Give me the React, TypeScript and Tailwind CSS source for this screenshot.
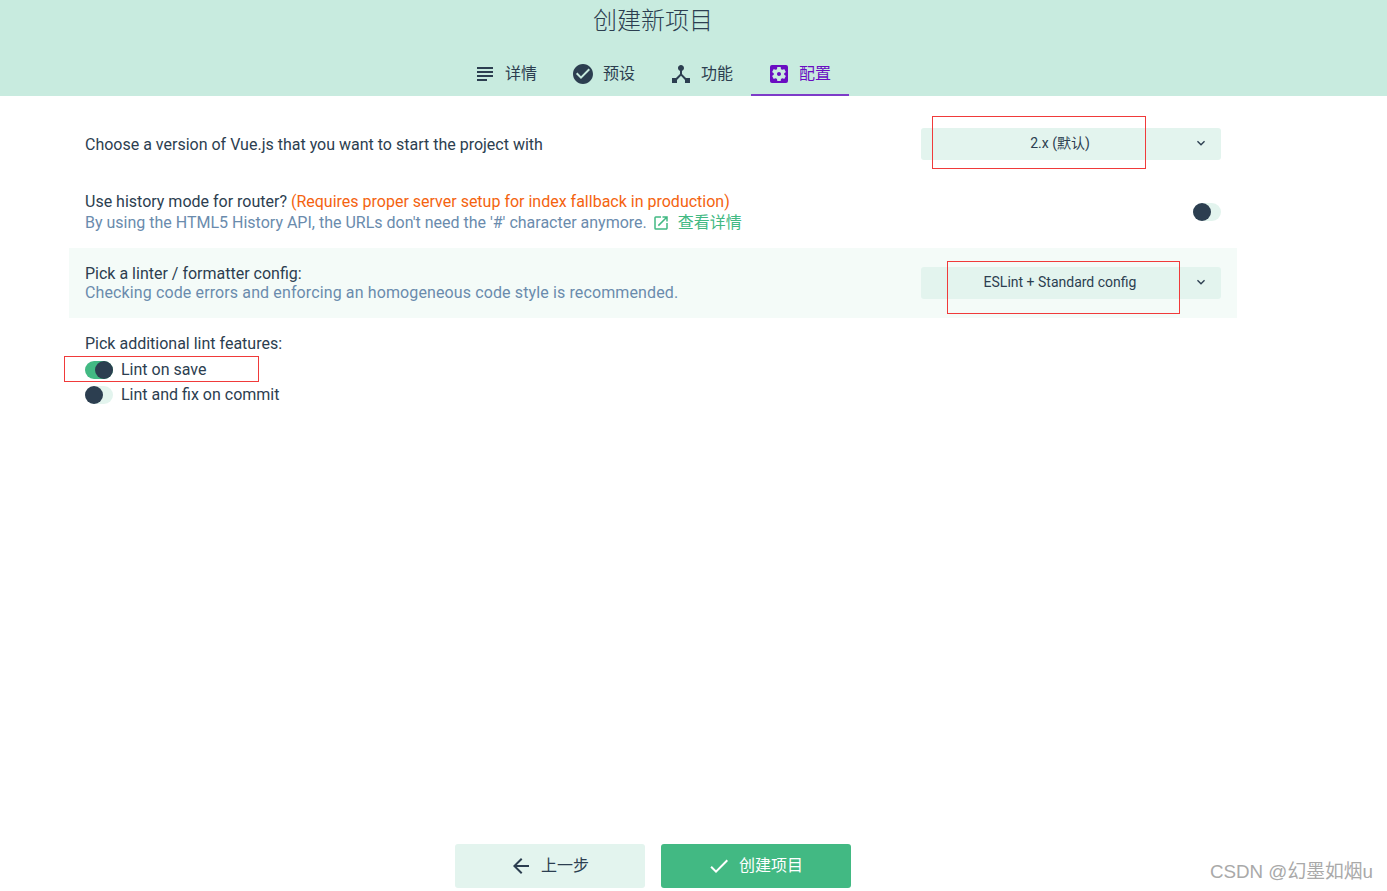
import type { ReactNode } from 'react';
import {
  MdArrowBack,
  MdCheckCircle,
  MdDeviceHub,
  MdDone,
  MdKeyboardArrowDown,
  MdOpenInNew,
  MdSettingsApplications,
  MdSubject,
} from 'react-icons/md';

const fontStack = { fontFamily: 'Roboto, "Noto Sans CJK SC", sans-serif' };

function Tab({ icon, label, active }: { icon: ReactNode; label: string; active?: boolean }) {
  return (
    <div
      className={`flex h-[38px] w-[98px] items-center gap-2 border-b-2 pb-[4px] pl-4 pr-[18px] text-base ${
        active ? 'border-[#7d3cc8] text-[#6a0dc2]' : 'border-transparent text-[#2c3e50]'
      }`}
    >
      {icon}
      <span className="whitespace-nowrap">{label}</span>
    </div>
  );
}

function Select({ value }: { value: string }) {
  return (
    <div className="flex h-8 w-[300px] shrink-0 items-center rounded-[3px] bg-[#e3f4ee] text-sm text-[#2c3e50]">
      <span className="flex-1 pb-[3px] pl-[6px] text-center">{value}</span>
      <MdKeyboardArrowDown className="mr-3 mb-[2px]" size={16} />
    </div>
  );
}

function Toggle({ on }: { on?: boolean }) {
  return (
    <div className={`relative h-[18px] w-7 shrink-0 rounded-full ${on ? 'bg-[#42b983]' : 'bg-[#e3f4ee]'}`}>
      <div className={`absolute top-0 h-[18px] w-[18px] rounded-full bg-[#2c3e50] ${on ? 'right-0' : 'left-0'}`} />
    </div>
  );
}

function RedBox({ className }: { className: string }) {
  return <div className={`pointer-events-none absolute border border-[#f03a3a] ${className}`} />;
}

export default function App() {
  return (
    <div className="relative flex h-[891px] w-full flex-col overflow-hidden bg-white text-base text-[#2c3e50]" style={fontStack}>
      {/* header */}
      <div className="h-24 bg-[#c8ebdf]">
        <div className="flex w-[1306px] flex-col items-center">
          <div className="flex h-[58px] items-start pt-[4px] text-2xl leading-[34px] font-light">创建新项目</div>
          <div className="flex">
            <Tab icon={<MdSubject size={24} />} label="详情" />
            <Tab icon={<MdCheckCircle size={24} />} label="预设" />
            <Tab icon={<MdDeviceHub size={24} />} label="功能" />
            <Tab icon={<MdSettingsApplications size={24} />} label="配置" active />
          </div>
        </div>
      </div>

      {/* prompts */}
      <div className="ml-[69px] flex w-[1168px] flex-col">
        <div className="mt-8 flex h-8 items-center justify-between px-4">
          <span className="pt-[1px]">Choose a version of Vue.js that you want to start the project with</span>
          <Select value="2.x (默认)" />
        </div>

        <div className="mt-[30px] flex h-[44px] items-center justify-between px-4">
          <div className="flex flex-col pt-[2px]">
            <div className="leading-[20px]">
              Use history mode for router? <span className="text-[#f4630f]">(Requires proper server setup for index fallback in production)</span>
            </div>
            <div className="flex items-center leading-[22px] text-[#6a8bad]">
              By using the HTML5 History API, the URLs don't need the '#' character anymore.
              <span className="ml-[5px] flex items-center gap-[8px] text-[#42b983]">
                <MdOpenInNew size={18} />
                查看详情
              </span>
            </div>
          </div>
          <Toggle />
        </div>

        <div className="mt-[14px] flex h-[70px] items-center justify-between bg-[#f4fbf8] px-4">
          <div className="flex flex-col leading-[19px]">
            <span>Pick a linter / formatter config:</span>
            <span className="tracking-[0.12px] text-[#6a8bad]">Checking code errors and enforcing an homogeneous code style is recommended.</span>
          </div>
          <Select value="ESLint + Standard config" />
        </div>

        <div className="mt-[17px] flex flex-col px-4">
          <div className="leading-[18px]">Pick additional lint features:</div>
          <div className="mt-[4px] flex h-[25px] items-center gap-2">
            <Toggle on />
            <span>Lint on save</span>
          </div>
          <div className="flex h-[25px] items-center gap-2">
            <Toggle />
            <span>Lint and fix on commit</span>
          </div>
        </div>
      </div>

      {/* actions */}
      <div className="mt-auto mb-[3px] flex w-[1306px] justify-center gap-4">
        <div className="flex h-11 w-[190px] items-center justify-center gap-2 rounded-[3px] bg-[#e3f4ee] pr-[2px] text-base text-[#2c3e50]">
          <MdArrowBack size={24} />
          上一步
        </div>
        <div className="flex h-11 w-[190px] items-center justify-center gap-2 rounded-[3px] bg-[#42b983] pr-[2px] text-base text-white">
          <MdDone size={24} />
          创建项目
        </div>
      </div>

      {/* annotations pasted over the screenshot */}
      <RedBox className="top-[116px] left-[932px] h-[53px] w-[214px]" />
      <RedBox className="top-[261px] left-[947px] h-[53px] w-[233px]" />
      <RedBox className="top-[356px] left-[64px] h-[26px] w-[195px]" />

      <div
        className="absolute right-[14px] bottom-[7px] text-[18.8px] leading-[24px] text-[#a9a9a9]"
        style={{ fontFamily: '"Liberation Sans", "Noto Sans CJK SC", sans-serif' }}
      >
        CSDN @幻墨如烟u
      </div>
    </div>
  );
}
